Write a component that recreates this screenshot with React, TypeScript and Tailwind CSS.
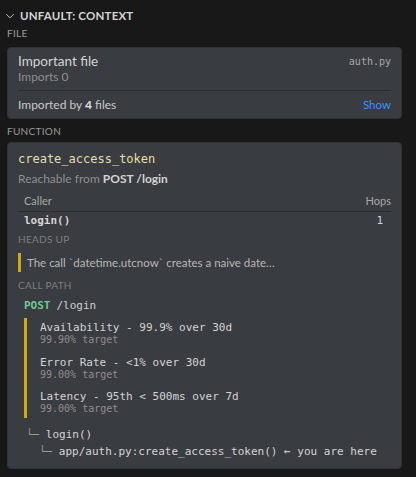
import React from "react";

const sans = { fontFamily: 'Lato, "Noto Sans", sans-serif' };
const mono = { fontFamily: '"DejaVu Sans Mono", monospace' };

export default function App() {
  return (
    <div className="w-[416px] h-[477px] bg-[#181818] text-[#cccccc] overflow-hidden" style={sans}>
      <div className="h-[32px] flex items-center pl-[4px] gap-[4px]">
        <svg width="12" height="12" viewBox="0 0 16 16" fill="none" stroke="#c5c5c5" strokeWidth="1.3">
          <path d="M3 5.5l5 5 5-5" />
        </svg>
        <span className="text-[11.5px] font-bold text-[#d4d4d4] tracking-[0.2px]">UNFAULT: CONTEXT</span>
      </div>
      <div className="px-[7px]">
        <div className="text-[10px] text-[#9a9a9a] h-[12px] leading-[12px] mt-[-5px] tracking-[0.3px]">FILE</div>
        <div className="mt-[8px] h-[72px] w-[395px] rounded-[4px] bg-[#393c41] border border-[#2f3135] px-[10px]">
          <div className="flex justify-between items-center pt-[5px] h-[21px]">
            <span className="text-[13.5px] text-[#d4d4d4]">Important file</span>
            <span className="text-[10px] text-[#a8a8a8]" style={mono}>auth.py</span>
          </div>
          <div className="text-[12px] text-[#8e8e8e] h-[15px] leading-[15px]">Imports 0</div>
          <div className="border-t border-[#2c2e31] mt-[6px]" />
          <div className="flex justify-between items-center h-[28px]">
            <span className="text-[12px] text-[#c8c8c8]">Imported by <b className="text-[#e0e0e0]">4</b> files</span>
            <span className="text-[11.5px] text-[#3794ff]">Show</span>
          </div>
        </div>
        <div className="text-[10px] text-[#9a9a9a] h-[12px] leading-[12px] mt-[6px] tracking-[0.3px]">FUNCTION</div>
        <div className="mt-[5px] h-[327px] w-[395px] rounded-[4px] bg-[#393c41] border border-[#2f3135] px-[10px]">
          <div className="pt-[6px] h-[25px] flex items-center">
            <span className="text-[12px] text-[#e5dfa6]" style={mono}>create_access_token</span>
          </div>
          <div className="text-[12px] text-[#8e8e8e] h-[16px] leading-[16px] mt-[3px]">
            Reachable from <b className="text-[#d4d4d4]">POST /login</b>
          </div>
          <div className="mt-[7px] flex justify-between px-[6px] h-[14px] items-center text-[11px] text-[#a8a8a8]">
            <span>Caller</span>
            <span className="mr-[-6px]">Hops</span>
          </div>
          <div className="border-t border-[#2c2e31] mt-[3px]" />
          <div className="flex justify-between pl-[6px] pr-[8px] pt-[1px] h-[18px] items-center text-[11px] text-[#d4d4d4]" style={mono}>
            <span className="font-bold">login()</span>
            <span>1</span>
          </div>
          <div className="text-[10px] text-[#7e7e7e] h-[12px] leading-[12px] mt-[3px] tracking-[0.3px]">HEADS UP</div>
          <div className="mt-[8px] flex h-[19px] items-stretch">
            <div className="w-[3px] bg-[#d4a90a]" />
            <span className="pl-[6px] text-[11.5px] text-[#b8b8b8] leading-[19px]">The call `datetime.utcnow` creates a naive date…</span>
          </div>
          <div className="text-[10px] text-[#7e7e7e] h-[12px] leading-[12px] mt-[7px] tracking-[0.3px]">CALL PATH</div>
          <div className="mt-[8px] h-[14px] pl-[6px] flex items-center text-[11px]" style={mono}>
            <span className="font-bold text-[#73c991]">POST</span>
            <span className="ml-[6px] text-[#cfcfcf]">/login</span>
          </div>
          <div className="mt-[5px] ml-[6px] flex">
            <div className="w-[3px] bg-[#d4a90a] h-[100px]" />
            <div className="pl-[13px] pt-[3px] flex flex-col gap-[9.5px]" style={mono}>
              {[
                ["Availability - 99.9% over 30d", "99.90% target"],
                ["Error Rate - <1% over 30d", "99.00% target"],
                ["Latency - 95th < 500ms over 7d", "99.00% target"],
              ].map(([a, b]) => (
                <div key={a} className="flex flex-col">
                  <span className="text-[11px] text-[#d4d4d4] h-[13px] leading-[13px]">{a}</span>
                  <span className="text-[10px] text-[#8e8e8e] h-[12px] leading-[12px]">{b}</span>
                </div>
              ))}
            </div>
          </div>
          <div className="mt-[8px] pl-[8px] text-[11px] text-[#d4d4d4]" style={mono}>
            <div className="h-[17px] leading-[17px]"><span className="text-[#9a9a9a]">└─</span> login()</div>
            <div className="h-[17px] leading-[17px] pl-[13px]"><span className="text-[#9a9a9a]">└─</span> app/auth.py:create_access_token() ← you are here</div>
          </div>
        </div>
      </div>
    </div>
  );
}
